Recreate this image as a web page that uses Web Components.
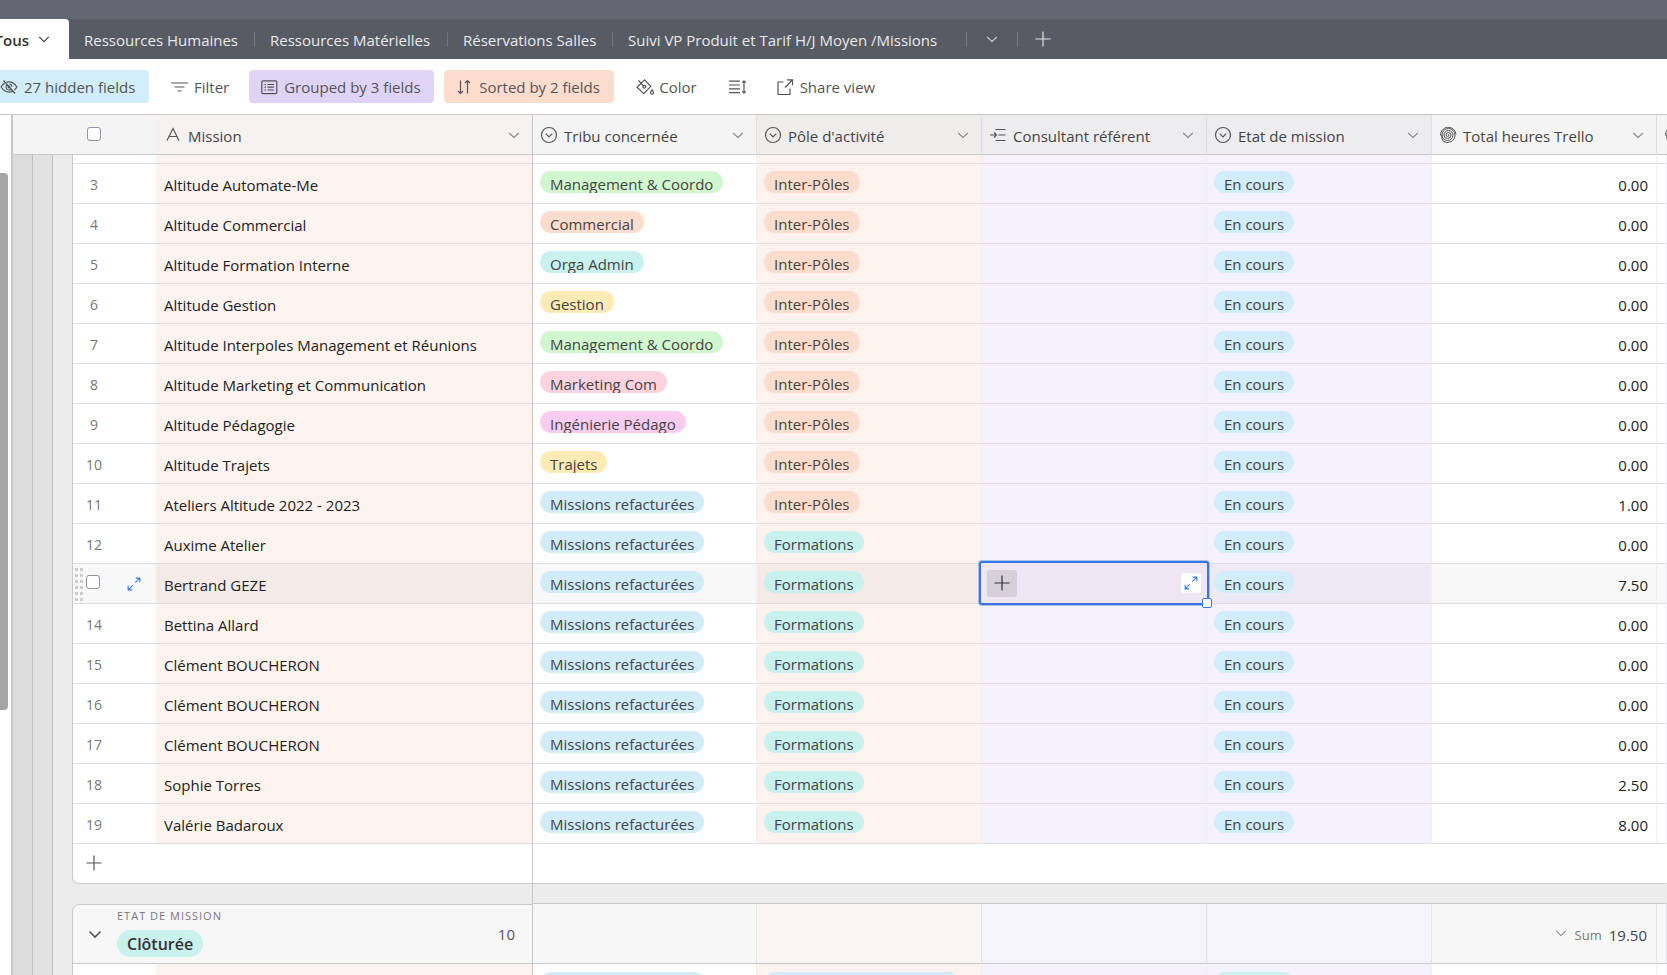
<!DOCTYPE html>
<html lang="fr">
<head>
<meta charset="utf-8">
<title>Missions</title>
<style>
html, body { margin: 0; height: 100%; }
body { font-family: "Open Sans", "Noto Sans", sans-serif; font-size: 15px; overflow: hidden; background: #fff; }
</style>
</head>
<body>
<base-app></base-app>
<script>
const ICONS = {
  chevron: '<path d="M2.5 5.5 8 11l5.500-5.500"/>',
  plus: '<path d="M8 .5v15M.5 8h15"/>',
  hidden: '<path d="M5.600 3.200A8.500 8.500 0 0 1 8 2.900c3.300 0 5.900 2 7.900 5.100a11 11 0 0 1-2.500 3M3.700 4.100A11 11 0 0 0 .1 8c2 3.100 4.600 5.100 7.900 5.100 1.500 0 2.800-.4 4-1.100M2.500 1.500l11.500 13M6 5.800a3 3 0 0 0 4.100 4.400M8.500 5a3 3 0 0 1 2.500 2.700"/><circle cx="8" cy="8" r=".8"/>',
  filter: '<path d="M0 4h17M3.500 8h10M6.500 12h4"/>',
  group: '<rect x=".8" y="1.800" width="15" height="12.800" rx="1"/><path d="M3.500 5.500h1.500M6.500 5.500h6.500M3.500 8.200h1.500M6.500 8.200h6.500M3.500 11h1.500M6.500 11h6.500"/>',
  sort: '<path d="M4.500 1.500v13M2 12 4.500 14.500 7 12M11.500 14.500V1.500M9 4l2.500-2.500L14 4"/>',
  color: '<path d="M8.500.8l6.300 6.500-7 7.400L1 8.200zM2.500 1.500l5 5.300"/><circle cx="8.300" cy="7.700" r="1.400"/><path d="M16 10.800c1 1.500 1.500 2.100 1.500 2.900a1.500 1.500 0 0 1-3 0c0-.8.500-1.400 1.500-2.900z"/>',
  height: '<path d="M0 2.200h11M0 6h11M0 9.800h11M0 13.600h11M15 2v12M13.300 3.700l1.700-1.900 1.700 1.900M13.300 12.300l1.700 1.900 1.700-1.900"/>',
  share: '<path d="M6.500 3H1v12.500h12V9.500M8 8.500l7.300-7.500M10 .8h5.500V6.200"/>',
  text: '<path d="M2 13.500 8 1.500l6 12M4.200 9.500h7.600"/>',
  select: '<circle cx="8" cy="8" r="7.500"/><path d="M4.800 6.700 8 9.900l3.200-3.200"/>',
  lookup: '<path d="M5.500 2.500h10M8.500 8h7M5.500 13.500h10M0 8h6M4 5.500 6.500 8 4 10.500"/>',
  rollup: '<path stroke-width="1" d="M8 8a.5.500 0 0 1 1 0a1.500 1.500 0 0 1-3 0a2.500 2.500 0 0 1 5 0a3.500 3.500 0 0 1-7 0a4.500 4.500 0 0 1 9 0a5.500 5.500 0 0 1-11 0a6.500 6.500 0 0 1 13 0A7.500 7.500 0 0 1 3 14M2 8A7 7 0 0 0 3 14M.500 8.500A7.500 7.500 0 0 1 16 7.500"/>',
  expand: '<path d="M9.500 6.500 14.300 1.700M10 1.300h4.700V6M6.500 9.500 1.700 14.300M1.300 10v4.700H6"/>'
};

function define(name, html, setup) {
  const template = document.createElement('template');
  template.innerHTML = html;
  customElements.define(name, class extends HTMLElement {
    constructor() {
      super();
      this.attachShadow({ mode: 'open' }).append(template.content.cloneNode(true));
    }
    connectedCallback() { if (setup) setup(this, this.shadowRoot); }
  });
}

define('ui-icon', `
<style>
:host { display: inline-block; width: 16px; height: 16px; flex: none; }
svg { display: block; width: 100%; height: 100%; fill: none; stroke: currentColor; stroke-width: var(--stroke, 1.2); overflow: visible; }
</style><svg viewBox="0 0 16 16" aria-hidden="true"></svg>`,
(host, root) => { root.querySelector('svg').innerHTML = ICONS[host.getAttribute('name')]; });

define('tag-pill', `
<style>
:host { display: block; box-sizing: border-box; width: fit-content; height: 22px; padding: 0 10px; border-radius: 11px;
  line-height: 27px; overflow: hidden; white-space: nowrap; color: #444; background: #d0edf9; }
:host([tone=green]) { background: #d1f7d0; }
:host([tone=orange]) { background: #fcdccd; }
:host([tone=teal]) { background: #c9f1ed; }
:host([tone=cyan]) { background: #c9f1ef; }
:host([tone=yellow]) { background: #fdeab4; }
:host([tone=pink]) { background: #fcd3de; }
:host([tone=magenta]) { background: #f9ccf0; }
:host([size=large]) { height: 27px; border-radius: 14px; font-size: 16px; font-weight: 600; color: #333; line-height: 28px; }
</style><slot></slot>`);

define('view-tabs', `
<style>
:host { display: block; background: #575b64; border-top: 19px solid #636771; }
nav { display: flex; align-items: stretch; height: 40px; overflow: hidden; }
a { display: flex; align-items: center; box-sizing: border-box; padding: 2px 15px 0; color: #e8e9ea; text-decoration: none; white-space: nowrap; font-weight: 500; }
a.active { width: 69px; justify-content: flex-end; gap: 8px; padding: 2px 18px 0 0; background: #fff; color: #333; border-radius: 0 4px 0 0; font-weight: 600; }
.active .chev { margin-bottom: 2px; }
.people { width: 185px; } .assets { width: 192px; } .rooms { width: 164px; } .follow { width: 353px; }
i { width: 1px; height: 15px; margin-top: 13px; background: #73767e; }
button { border: 0; background: none; color: #e0e1e3; width: 50px; padding: 0; display: flex; align-items: center; justify-content: center; }
.chev { width: 14px; height: 14px; }
</style>
<nav aria-label="Vues">
<a class="active" href="#tous">Tous <ui-icon class="chev" name="chevron"></ui-icon></a>
<a class="people" href="#rh">Ressources Humaines</a><i></i>
<a class="assets" href="#rm">Ressources Matérielles</a><i></i>
<a class="rooms" href="#salles">Réservations Salles</a><i></i>
<a class="follow" href="#suivi">Suivi VP Produit et Tarif H/J Moyen /Missions</a><i></i>
<button aria-label="Plus de tables"><ui-icon class="chev" name="chevron"></ui-icon></button><i></i>
<button aria-label="Ajouter"><ui-icon name="plus"></ui-icon></button>
</nav>`);

define('tool-button', `
<style>
:host { display: block; }
button { display: flex; align-items: center; gap: 7px; width: 100%; height: 33px; padding: 0 10px 0 12px; border: 0; border-radius: 4px;
  background: var(--fill, none); font: inherit; color: #555; white-space: nowrap; }
</style><button><ui-icon></ui-icon><slot></slot></button>`,
(host, root) => {
  const icon = document.createElement('ui-icon');
  icon.setAttribute('name', host.getAttribute('icon'));
  root.querySelector('ui-icon').replaceWith(icon);
  if (host.hasAttribute('label')) root.querySelector('button').setAttribute('aria-label', host.getAttribute('label'));
});

define('view-toolbar', `
<style>
:host { display: flex; align-items: center; gap: 10px; height: 55px; overflow: hidden; box-sizing: border-box; }
.first { margin-left: -11px; width: 160px; --fill: #d0edf9; }
.group { width: 185px; --fill: #dfd4f6; }
.sort { width: 170px; --fill: #fcdccd; }
</style>
<tool-button class="first" icon="hidden">27 hidden fields</tool-button>
<tool-button icon="filter">Filter</tool-button>
<tool-button class="group" icon="group">Grouped by 3 fields</tool-button>
<tool-button class="sort" icon="sort">Sorted by 2 fields</tool-button>
<tool-button icon="color">Color</tool-button>
<tool-button icon="height" label="Row height"></tool-button>
<tool-button icon="share">Share view</tool-button>`);

define('column-title', `
<style>
:host { display: flex; align-items: center; gap: 7px; padding: 0 11px 0 8px; height: 39px; color: #444; white-space: nowrap; }
.label { flex: 1; padding-top: 3px; }
ui-icon { color: #555; }
button { border: 0; background: none; padding: 0; display: flex; }
.chev { width: 14px; height: 14px; color: #777; }
</style>
<ui-icon></ui-icon><span class="label"><slot></slot></span>
<button aria-label="Menu"><ui-icon class="chev" name="chevron"></ui-icon></button>`,
(host, root) => {
  const icon = document.createElement('ui-icon');
  icon.setAttribute('name', host.getAttribute('icon'));
  root.querySelector('ui-icon').replaceWith(icon);
});

const ROWS = [
  [3, 'Altitude Automate-Me', 'Management & Coordo', 'green', '0.00'],
  [4, 'Altitude Commercial', 'Commercial', 'orange', '0.00'],
  [5, 'Altitude Formation Interne', 'Orga Admin', 'cyan', '0.00'],
  [6, 'Altitude Gestion', 'Gestion', 'yellow', '0.00'],
  [7, 'Altitude Interpoles Management et Réunions', 'Management & Coordo', 'green', '0.00'],
  [8, 'Altitude Marketing et Communication', 'Marketing Com', 'pink', '0.00'],
  [9, 'Altitude Pédagogie', 'Ingénierie Pédago', 'magenta', '0.00'],
  [10, 'Altitude Trajets', 'Trajets', 'yellow', '0.00'],
  [11, 'Ateliers Altitude 2022 - 2023', 'Missions refacturées', 'blue', '1.00'],
  [12, 'Auxime Atelier', 'Missions refacturées', 'blue', '0.00'],
  [13, 'Bertrand GEZE', 'Missions refacturées', 'blue', '7.50'],
  [14, 'Bettina Allard', 'Missions refacturées', 'blue', '0.00'],
  [15, 'Clément BOUCHERON', 'Missions refacturées', 'blue', '0.00'],
  [16, 'Clément BOUCHERON', 'Missions refacturées', 'blue', '0.00'],
  [17, 'Clément BOUCHERON', 'Missions refacturées', 'blue', '0.00'],
  [18, 'Sophie Torres', 'Missions refacturées', 'blue', '2.50'],
  [19, 'Valérie Badaroux', 'Missions refacturées', 'blue', '8.00']
];

const rowHtml = ([n, mission, tribu, tone, hours]) => {
  const current = n === 13;
  const pole = n <= 11 ? ['orange', 'Inter-Pôles'] : ['teal', 'Formations'];
  return `<tr class="${current ? 'current' : ''}"><td class="rail"></td>
<td class="num">${current ? '<div class="tools"><span class="grip"></span><input type="checkbox" aria-label="Bertrand GEZE"><button aria-label="Ouvrir"><ui-icon name="expand"></ui-icon></button></div>' : n}</td>
<td class="mission">${mission}</td>
<td><tag-pill tone="${tone}">${tribu.replace('&', '&amp;')}</tag-pill></td>
<td class="warm"><tag-pill tone="${pole[0]}">${pole[1]}</tag-pill></td>
<td class="cool">${current ? '<selected-cell></selected-cell>' : ''}</td>
<td class="cool"><tag-pill>En cours</tag-pill></td>
<td class="hours">${hours}</td><td></td></tr>`;
};

define('selected-cell', `
<style>
:host { position: absolute; inset: -3px -3px -2px -3px; box-sizing: border-box; display: flex; align-items: center; justify-content: space-between;
  padding: 0 6px; border: 2px solid #3875e0; border-radius: 3px; box-shadow: 0 0 0 1px #a9c2f1; background: #eee7f3; z-index: 1; }
button { border: 0; padding: 0; display: flex; align-items: center; justify-content: center; border-radius: 3px; }
.add { width: 30px; height: 27px; background: #d6d0da; color: #333; }
.open { width: 20px; height: 20px; background: #fff; color: #3875e0; }
.open ui-icon { width: 14px; height: 14px; }
.handle { position: absolute; right: -5px; bottom: -5px; width: 8px; height: 8px; border: 1px solid #3875e0; border-radius: 2px; background: #fff; }
</style>
<button class="add" aria-label="Ajouter"><ui-icon name="plus"></ui-icon></button>
<button class="open" aria-label="Agrandir"><ui-icon name="expand"></ui-icon></button>
<span class="handle"></span>`);

define('data-grid', `
<style>
:host { display: block; overflow: hidden; background: #ececec; border-left: 2px solid #c8c8c8; --line: #dedede; --edge: #c8c8c8; }
table { width: 100%; table-layout: fixed; border-collapse: separate; border-spacing: 0; }
.c-rail { width: 59px; } .c-num { width: 84px; } .c-mission { width: 377px; } .c-field { width: 225px; } .c-lead { width: 224px; }
th, td { box-sizing: border-box; padding: 0; font-weight: 400; text-align: left; white-space: nowrap; }
th { height: 40px; background: #f4f4f4; border-bottom: 1px solid var(--edge); border-right: 1px solid var(--line); }
th.plain { border-right: 0; text-align: center; }
th.t-mission { background: #f6f2f1; border-right-color: var(--edge); padding-left: 1px; }
th.t-warm { background: #efedeb; } th.t-cool { background: #ededef; }
td { position: relative; height: 40px; background: #fff; border-bottom: 1px solid var(--line); border-right: 1px solid #f0eff2; padding: 0 7px 1px 7px; }
td.rail { padding: 0; border: 0; background: linear-gradient(90deg, #dcdcdc 19px, #c0c0c0 19px 20px, #e2e2e2 20px 39px, #c0c0c0 39px 40px, #ececec 40px); }
td.num { border-left: 1px solid var(--edge); border-right: 0; text-align: center; padding: 2px 41px 0 0; font-size: 14px; color: #777; }
td.mission { background: #fcf3ee; border-right-color: var(--edge); padding: 3px 8px 0 8px; color: #222; }
td.warm { background: #fcf3ee; } td.cool { background: #f5f2fd; }
td.hours { text-align: right; padding: 3px 8px 0 0; color: #222; }
tag-pill { margin-bottom: 3px; }
.current td:not(.rail) { background: #f8f8f8; }
.current td.mission, .current td.warm { background: #f5ebe6; }
.current td.cool { background: #eeeaf5; }
td.num:has(.tools) { padding: 0; }
.tools { display: flex; align-items: center; height: 39px; }
.grip { width: 8px; height: 34px; margin: 2px 3px 0 2px; background: conic-gradient(from 270deg at 3px 3px, #ccc 90deg, transparent 90deg) 0 0 / 5px 6px; }
input { appearance: none; width: 14px; height: 14px; margin: 0; box-sizing: border-box; border: 1px solid #8f95a0; border-radius: 3px; background: #fff; vertical-align: middle; }
.tools input { margin-bottom: 3px; }
.t-check input { margin: 0 41px 4px 0; vertical-align: middle; }
button { border: 0; background: none; padding: 0; display: flex; color: #555; }
.tools button { color: #3875e0; margin-left: 27px; }
.tools button ui-icon { width: 14px; height: 14px; }
.cut td { height: 9px; padding: 0; }
.add td { border-right-color: transparent; border-bottom-color: var(--edge); }
.add td.lead { border-left: 1px solid var(--edge); border-right-color: var(--edge); border-bottom-left-radius: 7px; padding: 0 0 2px 13px; }
.gap td { height: 20px; background: #ececec; border-right-color: transparent; border-bottom: 1px solid var(--edge); padding: 0; }
.gap td.lead { border-right-color: var(--edge); border-bottom: 0; }
.gap td.lead { height: 19px; }
.gap td.rail, .add td.rail, .head td.rail { border: 0; background: linear-gradient(90deg, #dcdcdc 19px, #c0c0c0 19px 20px, #e2e2e2 20px 39px, #c0c0c0 39px 40px, #ececec 40px); }
.head td { height: 60px; background: #f7f7f7; border-right-color: #e4e3e8; border-bottom-color: var(--edge); }
.head td.lead { border-left: 1px solid var(--edge); border-top: 1px solid var(--edge); border-right-color: var(--edge); border-top-left-radius: 7px; padding: 0 17px 0 14px; }
.head td.warm { background: #f9f5f4; } .head td.cool { background: #f5f4fa; }
.summary { display: flex; align-items: center; gap: 14px; color: #555; }
.summary div { flex: 1; }
.summary > button { --stroke: 1.6; }
.caption { display: block; font-size: 11px; line-height: 15px; letter-spacing: 1px; text-transform: uppercase; color: #777; margin-bottom: 7px; }
.summary tag-pill { margin-bottom: 4px; }
.sum { display: flex; justify-content: flex-end; align-items: center; gap: 7px; padding: 3px 2px 0 0; color: #444; }
.sum small { font-size: 13px; color: #777; } .sum ui-icon { width: 14px; height: 14px; color: #888; margin-bottom: 3px; }
.next td { vertical-align: top; padding-top: 8px; }
.w165 { width: 165px; } .w195 { width: 195px; } .w80 { width: 80px; }
</style>
<table>
<colgroup><col class="c-rail"><col class="c-num"><col class="c-mission"><col class="c-lead"><col class="c-field"><col class="c-field"><col class="c-field"><col class="c-field"><col></colgroup>
<thead><tr>
<th class="plain"></th><th class="plain t-check"><input type="checkbox" aria-label="Tout sélectionner"></th>
<th class="t-mission"><column-title icon="text">Mission</column-title></th>
<th><column-title icon="select">Tribu concernée</column-title></th>
<th class="t-warm"><column-title icon="select">Pôle d'activité</column-title></th>
<th class="t-cool"><column-title icon="lookup">Consultant référent</column-title></th>
<th class="t-cool"><column-title icon="select">Etat de mission</column-title></th>
<th><column-title icon="rollup">Total heures Trello</column-title></th>
<th class="plain"><column-title icon="rollup"></column-title></th>
</tr></thead>
<tbody>
<tr class="cut"><td class="rail"></td><td class="num"></td><td class="mission"></td><td></td><td class="warm"></td><td class="cool"></td><td class="cool"></td><td></td><td></td></tr>
${ROWS.map(rowHtml).join('')}
<tr class="add"><td class="rail"></td><td class="lead" colspan="2"><button aria-label="Ajouter une ligne"><ui-icon name="plus"></ui-icon></button></td><td colspan="6"></td></tr>
<tr class="gap"><td class="rail"></td><td class="lead" colspan="2"></td><td colspan="6"></td></tr>
</tbody>
<tbody>
<tr class="head"><td class="rail"></td><td class="lead" colspan="2"><div class="summary"><button aria-label="Replier"><ui-icon name="chevron"></ui-icon></button><div><span class="caption">Etat de mission</span><tag-pill tone="teal" size="large">Clôturée</tag-pill></div><span>10</span></div></td>
<td></td><td class="warm"></td><td class="cool"></td><td class="cool"></td>
<td><div class="sum"><ui-icon name="chevron"></ui-icon><small>Sum</small><span>19.50</span></div></td><td></td></tr>
<tr class="next"><td class="rail"></td><td class="num"></td><td class="mission"></td><td><tag-pill class="w165"></tag-pill></td><td class="warm"><tag-pill class="w195"></tag-pill></td><td class="cool"></td><td class="cool"><tag-pill class="w80" tone="teal"></tag-pill></td><td></td><td></td></tr>
</tbody>
</table>`);

define('base-app', `
<style>
:host { display: grid; grid-template-rows: auto auto 1fr; height: 100vh; overflow: hidden; }
main { display: grid; grid-template-columns: 11px 1fr; border-top: 1px solid #c8c8c8; min-height: 0; }
aside { display: flex; flex-direction: column; padding-top: 58px; background: #fff; }
.thumb { width: 8px; height: 67%; border-radius: 0 4px 4px 0; background: #a5a5a5; }
data-grid { min-width: 0; }
</style>
<view-tabs></view-tabs>
<view-toolbar></view-toolbar>
<main><aside><div class="thumb"></div></aside><data-grid></data-grid></main>`);
</script>
</body>
</html>
